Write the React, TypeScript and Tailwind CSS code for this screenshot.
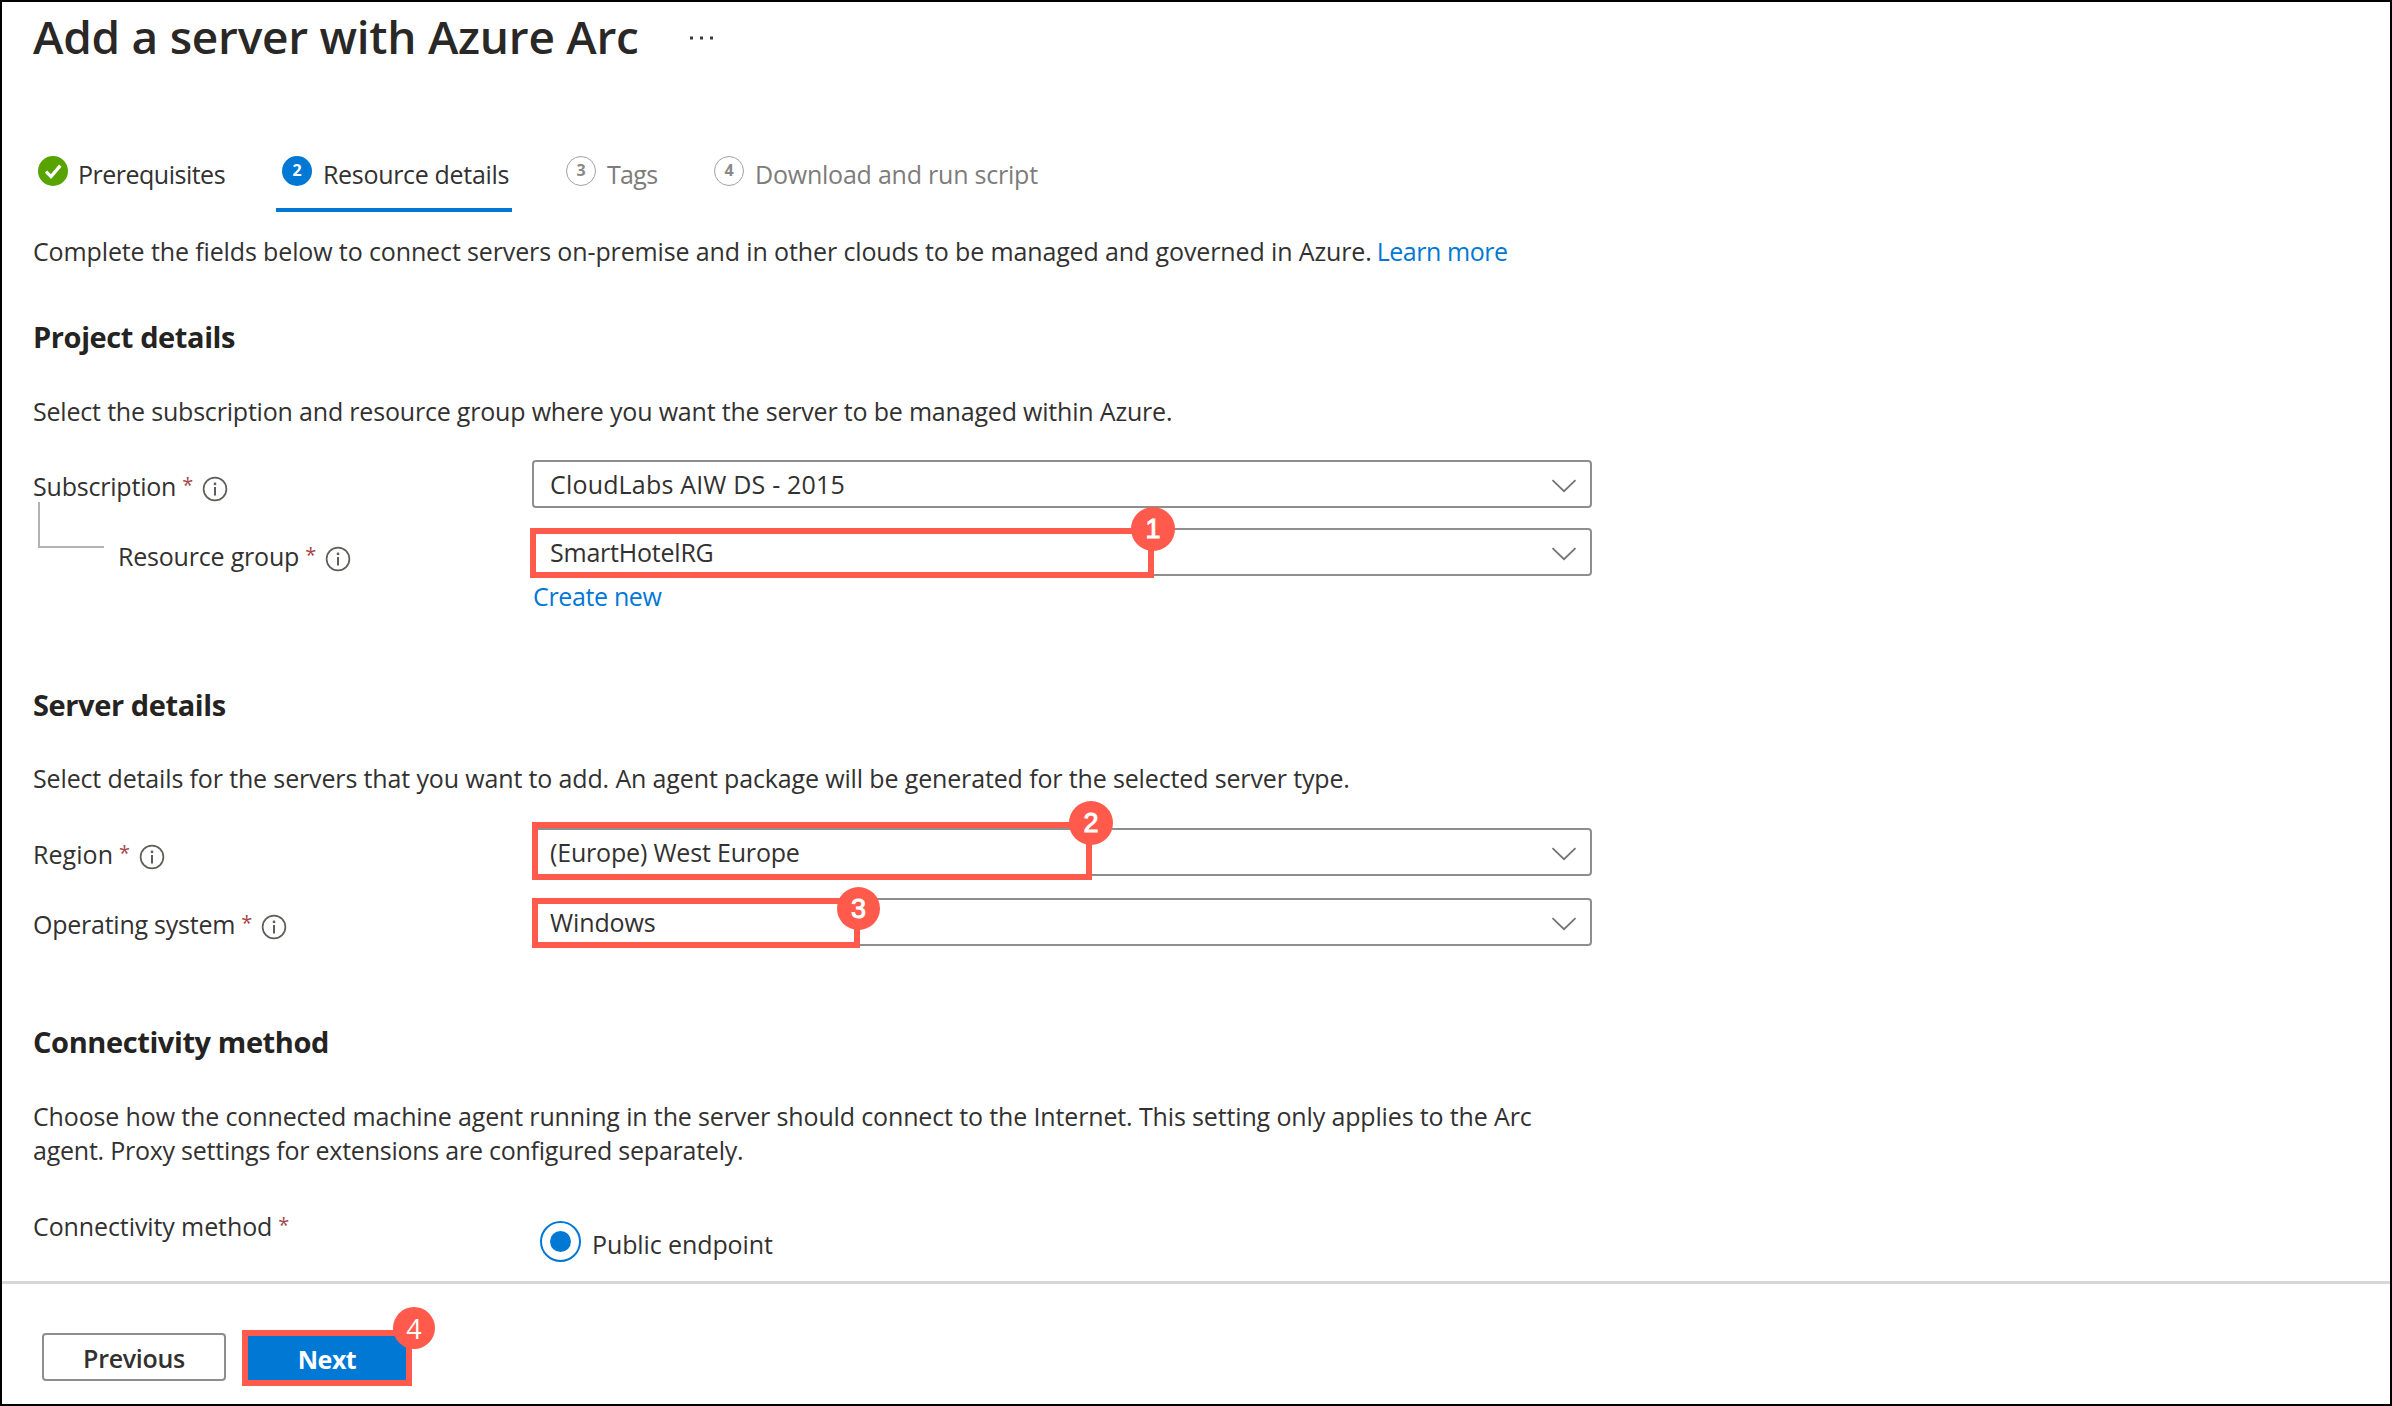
import type { ReactNode } from "react";

function InfoIcon() {
  return (
    <svg className="mt-[7px] h-[26px] w-[26px] shrink-0" viewBox="0 0 26 26" fill="none">
      <circle cx="13" cy="13" r="11.4" stroke="#5f5d5a" strokeWidth="1.7" />
      <rect x="12" y="11" width="2" height="8.5" fill="#5f5d5a" />
      <rect x="11.8" y="6.6" width="2.4" height="2.5" fill="#5f5d5a" />
    </svg>
  );
}

function Label({ text, spacing, info = true }: { text: string; spacing: string; info?: boolean }) {
  return (
    <div className="flex items-start">
      <span className={`whitespace-nowrap ${spacing}`}>{text}</span>
      <span className="ml-[6px] w-[10px] text-[20px] leading-[32px] text-[#a4484a]">*</span>
      {info && (
        <div className="ml-[10px]">
          <InfoIcon />
        </div>
      )}
    </div>
  );
}

function Select({ value, spacing, children }: { value: string; spacing: string; children?: ReactNode }) {
  return (
    <div className="relative flex h-12 w-[1060px] items-center justify-between rounded-[4px] border-2 border-[#8f8e8d] pr-[13px] pl-[16px] leading-[44px]">
      <span className={`whitespace-nowrap ${spacing}`}>{value}</span>
      <svg className="mt-[3px] h-[14px] w-[26px]" viewBox="0 0 26 14" fill="none">
        <path d="M1.5 1.2 13 12.2 24.5 1.2" stroke="#737478" strokeWidth="1.8" />
      </svg>
      {children}
    </div>
  );
}

function Badge({ n, place }: { n: string; place: string }) {
  const face =
    n === "4"
      ? "font-['Open_Sans',sans-serif] text-[27px]"
      : "font-['Liberation_Sans',sans-serif] text-[27px] [-webkit-text-stroke:1px_white]";
  return (
    <div
      className={`absolute flex items-center justify-center rounded-full bg-[#ff5a4c] pt-px leading-none text-white ${face} ${place}`}
    >
      {n}
    </div>
  );
}

function StepCircle({ n, active }: { n: string; active?: boolean }) {
  return (
    <span
      className={`flex h-[30px] w-[30px] shrink-0 items-center justify-center rounded-full pb-[2px] text-[16px] leading-none font-bold ${
        active ? "bg-[#0078d4] text-white" : "border-[1.5px] border-[#a3a2a1] text-[#8a8988]"
      }`}
    >
      {n}
    </span>
  );
}

export default function App() {
  return (
    <div className="flex h-[1406px] w-[2392px] flex-col border-2 border-black bg-white font-['Open_Sans',sans-serif] text-[25px] leading-[34px] text-[#323130]">
      <main className="flex h-[1279px] flex-col pl-[31px]">
        <header className="mt-1 flex h-[60px] items-center">
          <h1 className="text-[46px] leading-[60px] font-semibold tracking-[-0.26px] whitespace-nowrap text-[#292827]">
            Add a server with Azure Arc
          </h1>
          <svg className="mt-[4px] ml-[51px] h-[4px] w-[23px]" viewBox="0 0 23 4" fill="#3b3a39">
            <rect x="0" y="0.5" width="3" height="3" />
            <rect x="10" y="0.5" width="3" height="3" />
            <rect x="20" y="0.5" width="3" height="3" />
          </svg>
        </header>

        <nav className="mt-[90px] flex h-[56px] items-start">
          <div className="flex w-[243px] gap-[10px] pl-[5px]">
            <svg className="h-[30px] w-[30px] shrink-0" viewBox="0 0 30 30" fill="none">
              <circle cx="15" cy="15" r="15" fill="#57a300" />
              <path d="M8 15.6 13 20.6 22.3 9.6" stroke="white" strokeWidth="3.2" />
            </svg>
            <span className="pt-px tracking-[-0.5px]">Prerequisites</span>
          </div>
          <div className="flex h-[56px] w-[236px] gap-[11px] border-b-4 border-[#0078d4] pl-[6px] whitespace-nowrap">
            <StepCircle n="2" active />
            <span className="pt-px tracking-[-0.32px]">Resource details</span>
          </div>
          <div className="ml-[48px] flex w-[148px] gap-[11px] pl-[6px] text-[#7d7c7b]">
            <StepCircle n="3" />
            <span className="pt-px tracking-[-0.7px]">Tags</span>
          </div>
          <div className="flex gap-[11px] pl-[6px] whitespace-nowrap text-[#7d7c7b]">
            <StepCircle n="4" />
            <span className="pt-px tracking-[-0.22px]">Download and run script</span>
          </div>
        </nav>

        <p className="mt-[22px] flex whitespace-nowrap">
          <span className="tracking-[-0.125px]">
            Complete the fields below to connect servers on-premise and in other clouds to be managed and governed in
            Azure.
          </span>
          <a className="ml-[5px] tracking-[-0.45px] text-[#0078d4]">Learn more</a>
        </p>

        <h2 className="mt-[49px] text-[29px] leading-[40px] font-bold tracking-[-0.4px] text-[#242322]">
          Project details
        </h2>
        <p className="mt-[37px] tracking-[-0.19px]">
          Select the subscription and resource group where you want the server to be managed within Azure.
        </p>

        <div className="mt-[32px] flex items-start">
          <div className="w-[499px] pt-[9px]">
            <Label text="Subscription" spacing="tracking-[-0.2px]" />
          </div>
          <Select value="CloudLabs AIW DS - 2015" spacing="tracking-[0.18px]" />
        </div>

        <div className="mt-[20px] flex items-start">
          <div className="relative w-[499px] pt-[11px] pl-[85px]">
            <div className="absolute -top-[26px] left-[5px] h-[46px] w-[66px] border-b-2 border-l-2 border-[#b3b2b1]" />
            <Label text="Resource group" spacing="tracking-[-0.2px]" />
          </div>
          <Select value="SmartHotelRG" spacing="tracking-[-0.22px]">
            <div className="absolute -top-[2px] -left-[4px] h-[50px] w-[624px] border-6 border-[#ff5a4c]" />
            <Badge n="1" place="-top-[23px] left-[597px] h-[44px] w-[44px]" />
          </Select>
        </div>
        <a className="mt-[3px] ml-[500px] tracking-[-0.35px] text-[#0078d4]">Create new</a>

        <h2 className="mt-[72px] text-[29px] leading-[40px] font-bold tracking-[-0.4px] text-[#242322]">
          Server details
        </h2>
        <p className="mt-[36px] tracking-[-0.14px]">
          Select details for the servers that you want to add. An agent package will be generated for the selected
          server type.
        </p>

        <div className="mt-[33px] flex items-start">
          <div className="w-[499px] pt-[9px]">
            <Label text="Region" spacing="tracking-[0.05px]" />
          </div>
          <Select value="(Europe) West Europe" spacing="tracking-[-0.18px]">
            <div className="absolute -top-[8px] -left-[2px] h-[58px] w-[560px] border-6 border-[#ff5a4c]" />
            <Badge n="2" place="-top-[29px] left-[535px] h-[44px] w-[44px]" />
          </Select>
        </div>

        <div className="mt-[22px] flex items-start">
          <div className="w-[499px] pt-[9px]">
            <Label text="Operating system" spacing="tracking-[-0.24px]" />
          </div>
          <Select value="Windows" spacing="tracking-[-0.1px]">
            <div className="absolute -top-[2px] -left-[2px] h-[50px] w-[328px] border-6 border-[#ff5a4c]" />
            <Badge n="3" place="-top-[13px] left-[303px] h-[43px] w-[43px]" />
          </Select>
        </div>

        <h2 className="mt-[76px] text-[29px] leading-[40px] font-bold tracking-[-0.4px] text-[#242322]">
          Connectivity method
        </h2>
        <p className="mt-[37px] whitespace-nowrap">
          <span className="tracking-[-0.14px]">
            Choose how the connected machine agent running in the server should connect to the Internet. This setting
            only applies to the Arc
          </span>
          <br />
          <span className="tracking-[-0.24px]">
            agent. Proxy settings for extensions are configured separately.
          </span>
        </p>

        <div className="mt-[42px] flex items-start">
          <div className="w-[507px]">
            <Label text="Connectivity method" spacing="tracking-[-0.1px]" info={false} />
          </div>
          <div className="flex pt-[12px]">
            <div className="flex h-[41px] w-[41px] items-center justify-center rounded-full border-2 border-[#0078d4]">
              <div className="h-[21px] w-[21px] rounded-full bg-[#0078d4]" />
            </div>
            <span className="ml-[11px] pt-[6px] tracking-[-0.1px]">Public endpoint</span>
          </div>
        </div>
      </main>

      <footer className="flex flex-1 items-start border-t-3 border-[#d6d6d6] pt-[49px] pl-[40px] font-semibold">
        <button className="h-12 w-[184px] rounded-[4px] border-2 border-[#8f8e8d] leading-[46px] tracking-[-0.3px]">
          Previous
        </button>
        <div className="relative -mt-[3px] ml-[16px] h-[56px] w-[170px] border-6 border-[#ff5a4c]">
          <button className="block h-[44px] w-[158px] bg-[#0078d4] leading-[46px] font-bold tracking-[-0.5px] text-white">
            Next
          </button>
          <Badge n="4" place="-top-[29px] left-[145px] h-[42px] w-[42px] font-normal" />
        </div>
      </footer>
    </div>
  );
}
